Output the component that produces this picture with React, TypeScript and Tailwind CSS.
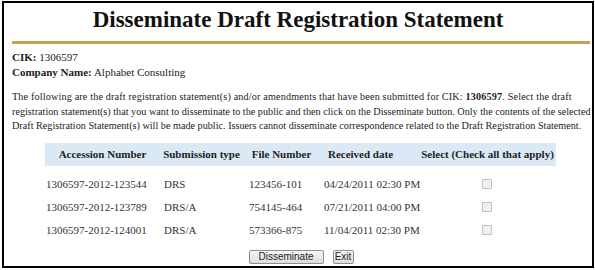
const rows = [
  { acc: '1306597-2012-123544', type: 'DRS', file: '123456-101', date: '04/24/2011 02:30 PM' },
  { acc: '1306597-2012-123789', type: 'DRS/A', file: '754145-464', date: '07/21/2011 04:00 PM' },
  { acc: '1306597-2012-124001', type: 'DRS/A', file: '573366-875', date: '11/04/2011 02:30 PM' },
];

const cols = 'grid grid-cols-[115px_83px_77px_99px_137px] whitespace-nowrap';

export default function App() {
  return (
    <div className="h-[270px] w-[595px] bg-white pl-[2px] pt-[1px] font-['Liberation_Serif',serif] text-black">
      <div className="flex h-[267px] w-[592px] flex-col border-2 border-black px-[8px]">
        <h1 className="pt-[3px] text-center text-[23px] font-bold leading-[28px] text-[#111]">
          Disseminate Draft Registration Statement
        </h1>
        <div className="mt-[7px] h-[3px] w-[578px] bg-[#c9a24d]" />

        <div className="mt-[6px] text-[11px] leading-[15px] text-[#222]">
          <div>
            <b>CIK:</b> 1306597
          </div>
          <div>
            <b>Company Name:</b> Alphabet Consulting
          </div>
        </div>

        <p className="mt-[10px] whitespace-nowrap text-[10.2px] leading-[14.5px] text-[#222]">
          <span className="tracking-[0.15px]">
            The following are the draft registration statement(s) and/or amendments that have been submitted for CIK:{' '}
            <b>1306597</b>. Select the draft
          </span>
          <br />
          registration statement(s) that you want to disseminate to the public and then click on the Disseminate button.
          Only the contents of the selected
          <br />
          Draft Registration Statement(s) will be made public. Issuers cannot disseminate correspondence related to the
          Draft Registration Statement.
        </p>

        <div className="ml-[33px] mt-[9px] flex w-[511px] flex-col text-[11px] text-[#333]">
          <div className={`${cols} mb-[7px] h-[23px] items-center bg-[#dbe9f7] font-bold text-[#222]`}>
            <div className="text-center">Accession Number</div>
            <div className="text-center">Submission type</div>
            <div className="text-center">File Number</div>
            <div className="pr-[18px] text-center">Received date</div>
            <div className="text-center">Select (Check all that apply)</div>
          </div>
          {rows.map((r) => (
            <div key={r.acc} className={`${cols} h-[23px] items-center`}>
              <div className="pl-[1px]">{r.acc}</div>
              <div className="pl-[4px]">{r.type}</div>
              <div className="pl-[6px]">{r.file}</div>
              <div className="pl-[4px]">{r.date}</div>
              <div className="flex justify-center pr-[2px]">
                <span className="h-[10px] w-[10px] border border-[#c4c4c4] bg-[#f0f0f0]" />
              </div>
            </div>
          ))}
        </div>

        <div className="mt-[8px] flex justify-center gap-[9px] pl-[6px] font-['Liberation_Sans',sans-serif] text-[10px]">
          <button className="h-[14px] w-[75px] rounded-[2px] border border-[#8e8e8e] bg-gradient-to-b from-[#f6f6f6] to-[#dcdcdc] leading-[12px] text-[#222]">
            Disseminate
          </button>
          <button className="h-[14px] w-[21px] rounded-[2px] border border-[#8e8e8e] bg-gradient-to-b from-[#f6f6f6] to-[#dcdcdc] leading-[12px] text-[#222]">
            Exit
          </button>
        </div>
      </div>
    </div>
  );
}
